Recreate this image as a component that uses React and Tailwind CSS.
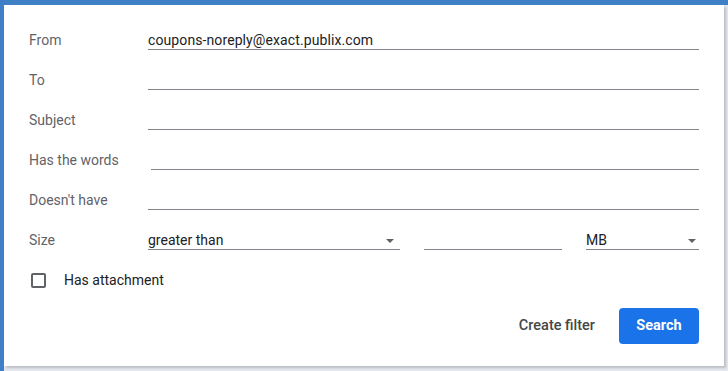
import React from 'react';

const textRows = [
  { label: "From", value: "coupons-noreply@exact.publix.com" },
  { label: "To", value: "" },
  { label: "Subject", value: "" },
  { label: "Has the words", value: "", offset: true },
  { label: "Doesn't have", value: "" },
];

const Caret = () => (
  <svg width="8" height="4" viewBox="0 0 8 4" className="shrink-0 mb-[6px]">
    <path d="M0 0h8L4 4z" fill="#5f6368" />
  </svg>
);

const FieldRow = ({ label, value, offset }) => (
  <div className="flex items-end h-10">
    <div className="w-[119px] shrink-0 pb-[1px] text-[14px] leading-[18px] text-[#5f6368]">{label}</div>
    <div className={`flex-1 border-b border-[#80868b] h-[22px] pt-[3px] text-[14px] leading-[18px] text-[#202124] tracking-[0.1px] ${offset ? "ml-[3px]" : ""}`}>
      {value}
    </div>
  </div>
);

const App = () => {
  return (
    <div
      className="w-[728px] h-[371px] overflow-hidden bg-[#e4e8ee] border-l-[4px] border-t-[5px] border-[#3f7fc6]"
      style={{ fontFamily: "Roboto, 'Liberation Sans', sans-serif" }}
    >
      <div className="w-[720px] h-[361px] bg-white shadow-[2px_2px_2px_rgba(0,0,0,0.18)] pt-[5px] px-[25px]">
        {textRows.map((row) => (
          <FieldRow key={row.label} {...row} />
        ))}

        <div className="flex items-end h-10">
          <div className="w-[119px] shrink-0 pb-[1px] text-[14px] leading-[18px] text-[#5f6368]">Size</div>
          <div className="w-[252px] flex items-end justify-between border-b border-[#80868b] h-[22px] pt-[3px] pr-[6px] text-[14px] leading-[18px] text-[#202124]">
            <span>greater than</span>
            <Caret />
          </div>
          <div className="w-[138px] ml-6 border-b border-[#80868b] h-[22px]" />
          <div className="flex-1 ml-6 flex items-end justify-between border-b border-[#80868b] h-[22px] pt-[3px] pr-[3px] text-[14px] leading-[18px] text-[#202124]">
            <span>MB</span>
            <Caret />
          </div>
        </div>

        <div className="flex items-center h-10 mt-[10px]">
          <div className="w-[15px] h-[15px] ml-[2px] border-2 border-[#5f6368] rounded-[2px]" />
          <span className="ml-[18px] text-[14px] text-[#202124]">Has attachment</span>
        </div>

        <div className="flex justify-end items-center mt-2">
          <button className="h-9 px-3 mr-3 text-[14.5px] font-medium text-[#444746]">Create filter</button>
          <button className="w-20 h-9 rounded-[4px] bg-[#1a73e8] text-white text-[14.5px] font-bold">Search</button>
        </div>
      </div>
    </div>
  );
};

export default App;
